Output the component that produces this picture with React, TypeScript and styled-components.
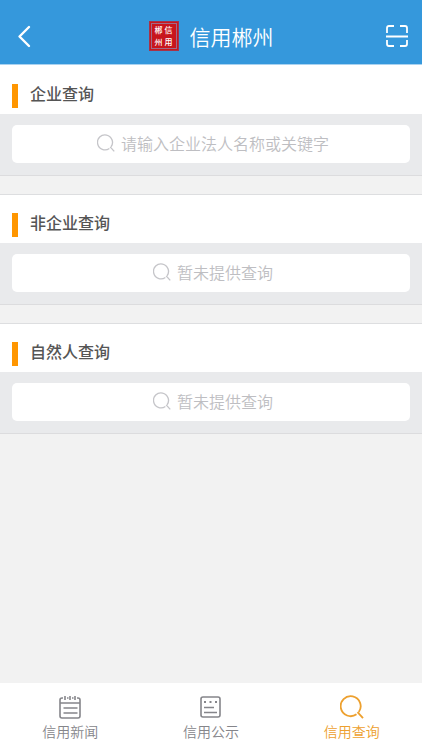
import React from "react";
import styled, { createGlobalStyle } from "styled-components";

const GlobalStyle = createGlobalStyle`
  * { box-sizing: border-box; }
  body {
    margin: 0;
    background: #f2f2f2;
    font-family: "Noto Sans CJK SC", sans-serif;
  }
`;

const Page = styled.div`
  min-height: 100vh;
  display: flex;
  flex-direction: column;
`;

const Header = styled.header`
  height: 65px;
  padding: 8px 11px 0;
  display: grid;
  grid-template-columns: 28px 1fr 28px;
  align-items: center;
  background: #3598dc;
  border-bottom: 1px solid #a9d2f0;
`;

const IconButton = styled.button`
  display: flex;
  justify-content: center;
  padding: 0;
  border: 0;
  background: none;
  color: #fff;
  cursor: pointer;
`;

const Brand = styled.div`
  display: flex;
  align-items: center;
  justify-content: center;
  gap: 11px;
`;

const Seal = styled.span`
  width: 30px;
  height: 30px;
  display: grid;
  grid-template-columns: 10px 10px;
  grid-auto-rows: 12px;
  place-content: center;
  background: #c8161d;
  border: 1px solid #a83248;
  outline: 1px solid #a06a88;
  outline-offset: -3px;
  color: #fff;
  font-size: 8px;
  font-weight: 500;
  line-height: 12px;
  text-align: center;
`;

const Title = styled.h1`
  margin: 0;
  color: #fff;
  font-size: 21px;
  font-weight: 350;
  line-height: 28px;
`;

const Main = styled.main`
  flex: 1;
  display: flex;
  flex-direction: column;
  gap: 18px;
`;

const Section = styled.section`
  background: #e9eaec;
  border-top: 1px solid #dddee0;
  border-bottom: 1px solid #dcdcde;

  &:first-child { border-top-color: #fff; }
`;

const Heading = styled.h2`
  height: 48px;
  margin: 0;
  padding: 5px 12px 0;
  display: flex;
  align-items: center;
  gap: 12px;
  background: #fff;
  color: #555;
  font-size: 16px;
  font-weight: 500;
  line-height: 24px;

  &::before {
    content: "";
    width: 6px;
    height: 24px;
    margin-top: 6px;
    background: #ff9600;
  }
`;

const Field = styled.label`
  height: 38px;
  margin: 11px 12px 12px;
  padding: 0 0 2px 4px;
  display: flex;
  align-items: center;
  justify-content: center;
  gap: 6px;
  background: #fff;
  border-radius: 5px;
  color: #c5c5c9;
  cursor: text;
`;

const FieldInput = styled.input`
  field-sizing: content;
  min-width: 16px;
  max-width: 85%;
  padding: 0;
  border: 0;
  outline: 0;
  background: none;
  color: #5c5c5c;
  font: 350 16px/24px "Noto Sans CJK SC", sans-serif;

  &::placeholder { color: #bebec2; opacity: 1; }
`;

const TabBar = styled.nav`
  position: sticky;
  bottom: 0;
  height: 67px;
  display: grid;
  grid-template-columns: repeat(3, 1fr);
  background: #fff;
`;

const Tab = styled.a<{ $active?: boolean }>`
  padding-top: 12px;
  display: flex;
  flex-direction: column;
  align-items: center;
  gap: 2px;
  color: ${(p) => (p.$active ? "#eda02e" : "#85858a")};
  font-size: 14px;
  font-weight: 350;
  line-height: 20px;
  text-decoration: none;
`;

const Svg = styled.svg`
  display: block;
  flex: none;
  fill: none;
  stroke: currentColor;
`;

const BackIcon = () => (
  <Svg width="24" height="24" viewBox="0 0 24 24" strokeWidth="2.4" strokeLinecap="round" strokeLinejoin="round">
    <path d="M16 3 6.5 12.5 16 22" />
  </Svg>
);

const ScanIcon = () => (
  <Svg width="24" height="24" viewBox="0 0 24 24" strokeWidth="1.8">
    <path d="M2 9V4q0-2 2-2h5M15 2h5q2 0 2 2v5M22 16v4q0 2-2 2h-5M9 22H4q-2 0-2-2v-4M1 12.5h22" />
  </Svg>
);

const SearchIcon = ({ size, weight }: { size: number; weight: number }) => (
  <Svg width={size} height={size} viewBox="0 0 24 24" strokeWidth={weight}>
    <path d="M16.500 19.300A10 10 0 1 1 18.800 17" />
    <path d="M17.5 17.2 23 23.2" />
  </Svg>
);

const NewsIcon = () => (
  <Svg width="24" height="24" viewBox="0 0 24 24" strokeWidth="1.6">
    <path d="M5 3H4Q2 3 2 5v16q0 2 2 2h16q2 0 2-2V5q0-2-2-2h-1M9 3h1.500M14 3h1.500M7 1v4M12 1v4M17 1v4M2 8h20M5.500 13h14M5.500 18h14" />
  </Svg>
);

const NoticeIcon = () => (
  <Svg width="24" height="24" viewBox="0 0 24 24" strokeWidth="1.6">
    <rect x="2" y="2" width="19" height="20" rx="2" />
    <path d="M5 7h2M10.500 7h2M16 7h2" strokeWidth="2" />
    <path d="M5 12.500h10M5 17.500h13" />
  </Svg>
);

const sections = [
  { title: "企业查询", placeholder: "请输入企业法人名称或关键字" },
  { title: "非企业查询", placeholder: "暂未提供查询" },
  { title: "自然人查询", placeholder: "暂未提供查询" },
];

export default function App() {
  return (
    <Page>
      <GlobalStyle />
      <Header>
        <IconButton type="button" aria-label="返回"><BackIcon /></IconButton>
        <Brand>
          <Seal aria-hidden="true">
            <span>郴</span><span>信</span><span>州</span><span>用</span>
          </Seal>
          <Title>信用郴州</Title>
        </Brand>
        <IconButton type="button" aria-label="扫一扫"><ScanIcon /></IconButton>
      </Header>
      <Main>
        {sections.map((s) => (
          <Section key={s.title}>
            <Heading>{s.title}</Heading>
            <Field>
              <SearchIcon size={18} weight={1.8} />
              <FieldInput type="text" aria-label={s.title} placeholder={s.placeholder} />
            </Field>
          </Section>
        ))}
      </Main>
      <TabBar>
        <Tab href="#news"><NewsIcon />信用新闻</Tab>
        <Tab href="#notice"><NoticeIcon />信用公示</Tab>
        <Tab href="#query" $active aria-current="page"><SearchIcon size={24} weight={1.8} />信用查询</Tab>
      </TabBar>
    </Page>
  );
}
